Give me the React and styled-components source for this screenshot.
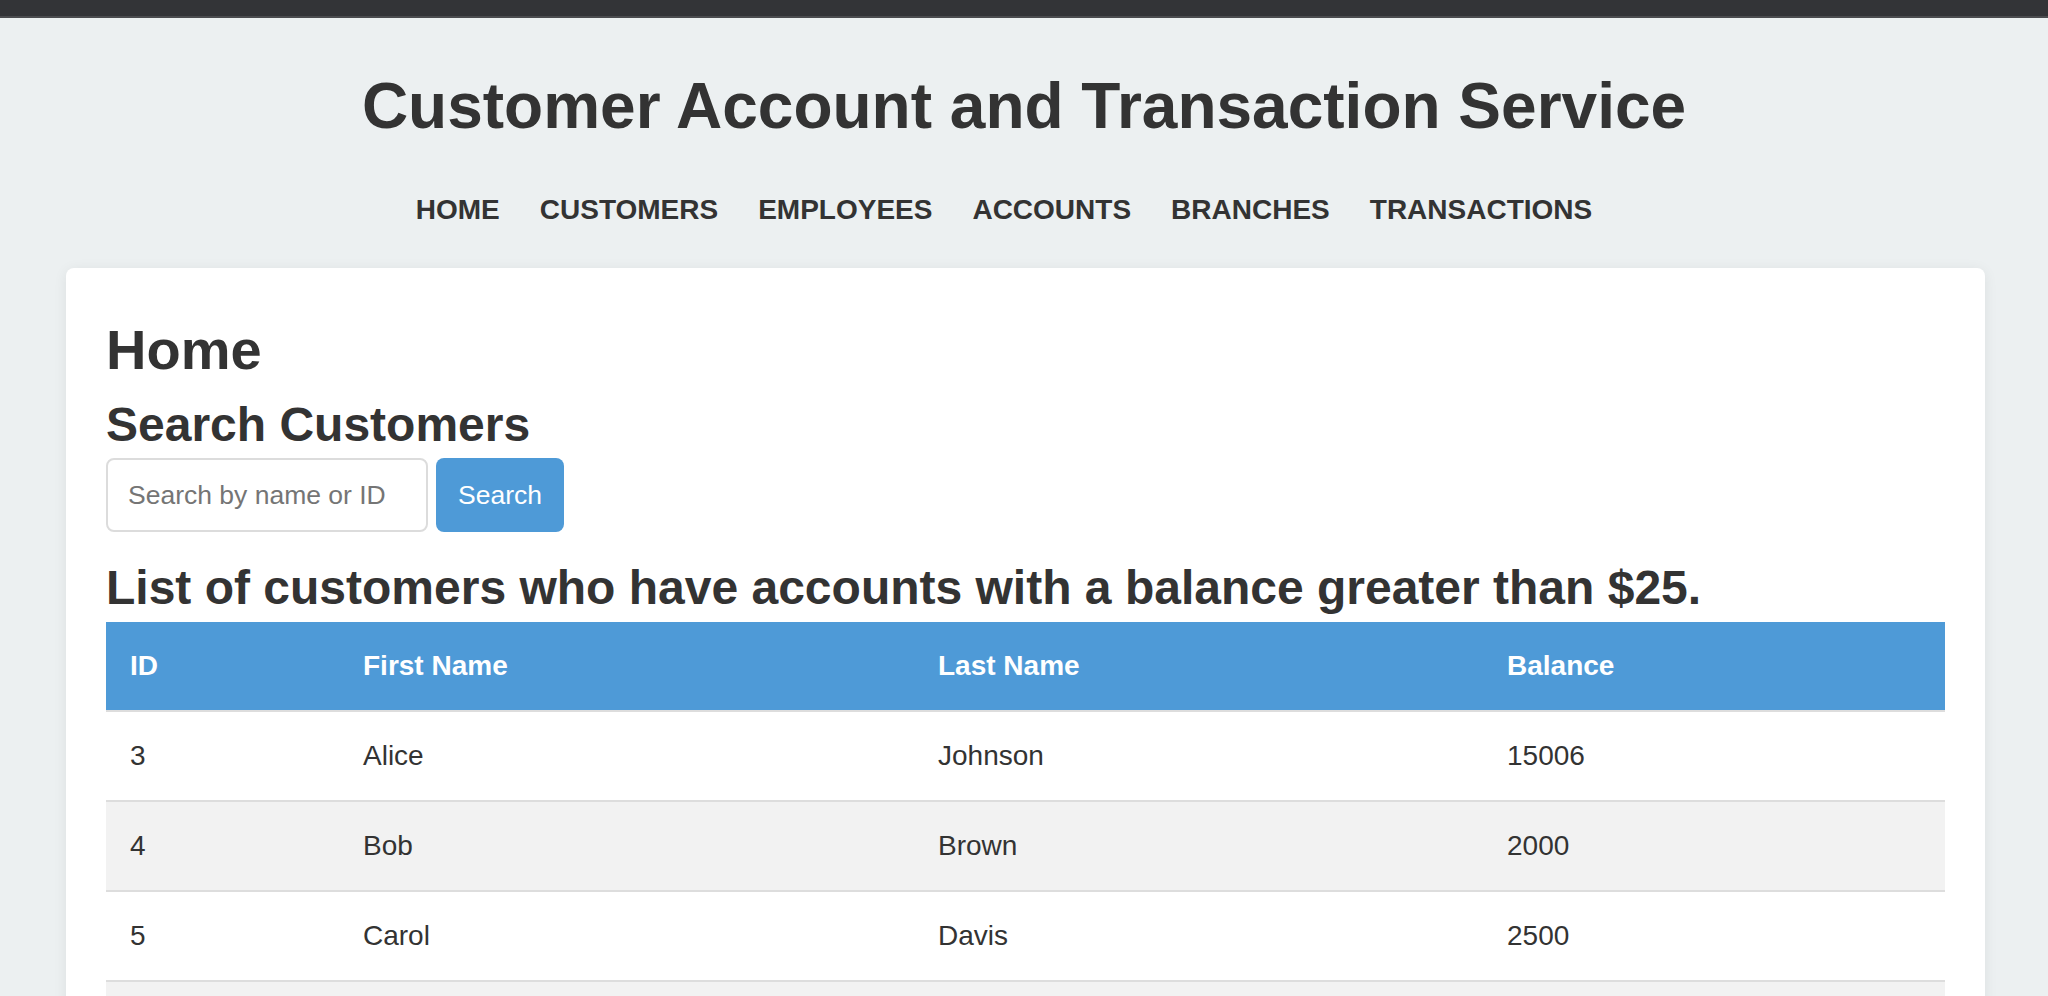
import React, { useState } from "react";
import styled, { createGlobalStyle } from "styled-components";

const GlobalStyle = createGlobalStyle`
  html, body {
    margin: 0;
    padding: 0;
    background: #ecf0f1;
    font-family: "Liberation Sans", Arial, Helvetica, sans-serif;
    color: #333;
  }
`;

const TopBar = styled.div`
  height: 16px;
  background: #333437;
  border-bottom: 2px solid #4b4c4f;
`;

const Header = styled.header`
  padding-top: 50px;
  text-align: center;
`;

const Title = styled.h1`
  margin: 0;
  font-size: 64px;
  line-height: 1.2;
  font-weight: 700;
  color: #333;
`;

const Nav = styled.nav`
  display: flex;
  justify-content: center;
  margin-top: 48px;
`;

const NavLink = styled.a`
  margin-right: 40px;
  font-size: 28px;
  line-height: 1.2;
  font-weight: 700;
  text-transform: uppercase;
  color: #333;
  text-decoration: none;
  cursor: pointer;
`;

const Card = styled.main`
  margin: 42px 63px 0 66px;
  padding: 40px;
  background: #fff;
  border-radius: 8px;
  box-shadow: 0 2px 14px rgba(0, 0, 0, 0.07);
`;

const PageTitle = styled.h2`
  margin: 8px 0 0;
  font-size: 56px;
  line-height: 1.2;
  font-weight: 700;
`;

const SectionTitle = styled.h3`
  margin: ${(p) => p.$top || 0}px 0 0;
  font-size: 48px;
  line-height: 1.2;
  font-weight: 700;
`;

const SearchRow = styled.form`
  display: flex;
  gap: 8px;
  margin-top: 5px;
`;

const SearchInput = styled.input`
  box-sizing: border-box;
  width: 322px;
  height: 74px;
  padding: 0 20px;
  border: 2px solid #dcdcdc;
  border-radius: 8px;
  font-family: inherit;
  font-size: 26.5px;
  color: #333;
  outline: none;
  &::placeholder {
    color: #757575;
  }
`;

const Button = styled.button`
  box-sizing: border-box;
  width: 128px;
  height: 74px;
  border: none;
  border-radius: 8px;
  background: #4e9ad7;
  color: #fff;
  font-family: inherit;
  font-size: 26.5px;
  cursor: pointer;
`;

const Table = styled.table`
  width: 100%;
  margin-top: 5px;
  border-collapse: collapse;
  table-layout: fixed;
`;

const HeadCell = styled.th`
  height: 88px;
  padding: 0 24px;
  background: #4e9ad7;
  color: #fff;
  font-size: 28px;
  font-weight: 700;
  text-align: left;
  border-bottom: 2px solid #dddddd;
`;

const Row = styled.tr`
  background: ${(p) => (p.$striped ? "#f2f2f2" : "#fff")};
`;

const Cell = styled.td`
  height: 88px;
  padding: 0 24px;
  font-size: 28px;
  color: #333;
  border-bottom: 2px solid #dddddd;
`;

const customers = [
  { id: 3, first: "Alice", last: "Johnson", balance: 15006 },
  { id: 4, first: "Bob", last: "Brown", balance: 2000 },
  { id: 5, first: "Carol", last: "Davis", balance: 2500 },
  { id: 6, first: "David", last: "Wilson", balance: 3200 },
  { id: 7, first: "Eve", last: "Miller", balance: 780 },
];

const links = ["Home", "Customers", "Employees", "Accounts", "Branches", "Transactions"];

export default function App() {
  const [query, setQuery] = useState("");

  return (
    <>
      <GlobalStyle />
      <TopBar />
      <Header>
        <Title>Customer Account and Transaction Service</Title>
        <Nav>
          {links.map((l) => (
            <NavLink key={l}>{l}</NavLink>
          ))}
        </Nav>
      </Header>
      <Card>
        <PageTitle>Home</PageTitle>
        <SectionTitle $top={12}>Search Customers</SectionTitle>
        <SearchRow onSubmit={(e) => e.preventDefault()}>
          <SearchInput
            type="text"
            placeholder="Search by name or ID"
            value={query}
            onChange={(e) => setQuery(e.target.value)}
          />
          <Button type="submit">Search</Button>
        </SearchRow>
        <SectionTitle $top={27}>
          List of customers who have accounts with a balance greater than $25.
        </SectionTitle>
        <Table>
          <colgroup>
            <col style={{ width: "233px" }} />
            <col style={{ width: "575px" }} />
            <col style={{ width: "569px" }} />
            <col />
          </colgroup>
          <thead>
            <tr>
              <HeadCell>ID</HeadCell>
              <HeadCell>First Name</HeadCell>
              <HeadCell>Last Name</HeadCell>
              <HeadCell>Balance</HeadCell>
            </tr>
          </thead>
          <tbody>
            {customers.map((c, i) => (
              <Row key={c.id} $striped={i % 2 === 1}>
                <Cell>{c.id}</Cell>
                <Cell>{c.first}</Cell>
                <Cell>{c.last}</Cell>
                <Cell>{c.balance}</Cell>
              </Row>
            ))}
          </tbody>
        </Table>
      </Card>
    </>
  );
}
